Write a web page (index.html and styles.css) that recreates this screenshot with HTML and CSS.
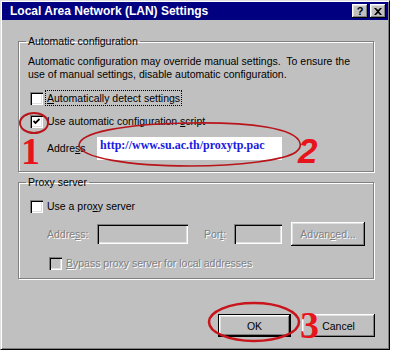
FILE: index.html
```html
<!DOCTYPE html>
<html lang="en">

<head>
  <meta charset="UTF-8">
  <title>Local Area Network (LAN) Settings</title>
  <link rel="stylesheet" href="styles.css">
</head>

<body>
  <div class="screen">
    <div class="dialog">
      <div class="titlebar">
        <span class="title">Local Area Network (LAN) Settings</span>
        <span class="title-buttons">
          <span class="tbtn">?</span>
          <span class="tbtn">
            <svg width="8" height="7" viewBox="0 0 8 7"><path d="M0 0h2l2 2 2-2h2L5 3.5 8 7H6L4 5 2 7H0l3-3.5z" fill="#000"/></svg>
          </span>
        </span>
      </div>

      <div class="content">
        <fieldset class="group group-auto">
          <legend>Automatic configuration</legend>
          <p class="desc">Automatic configuration may override manual settings.&nbsp; To ensure the<br>use of manual settings, disable automatic configuration.</p>
          <div class="check-row row-detect">
            <span class="box"></span>
            <span class="label focus"><u>A</u>utomatically detect settings</span>
          </div>
          <div class="check-row row-script">
            <span class="box">
              <svg width="7" height="7" viewBox="0 0 7 7"><polyline points="0.5,3 2.5,5 6.5,1" fill="none" stroke="#000" stroke-width="1.8"/></svg>
            </span>
            <span class="label">Use automatic configuration <u>s</u>cript</span>
          </div>
          <div class="field-row row-url">
            <span class="field-label">Addre<u>s</u>s</span>
            <div class="url">http://www.su.ac.th/proxytp.pac</div>
          </div>
        </fieldset>

        <fieldset class="group group-proxy">
          <legend>Proxy server</legend>
          <div class="check-row row-proxy">
            <span class="box"></span>
            <span class="label">Use a pro<u>x</u>y server</span>
          </div>
          <div class="field-row row-addr">
            <span class="field-label disabled">Addre<u>s</u>s:</span>
            <span class="field field-addr"></span>
            <span class="field-label disabled port-label">Por<u>t</u>:</span>
            <span class="field field-port"></span>
            <span class="btn btn-adv disabled">Advan<u>c</u>ed...</span>
          </div>
          <div class="check-row row-bypass">
            <span class="box box-disabled"></span>
            <span class="label disabled"><u>B</u>ypass proxy server for local addresses</span>
          </div>
        </fieldset>

        <div class="buttons">
          <span class="btn btn-default">OK</span>
          <span class="btn">Cancel</span>
        </div>
      </div>
    </div>

    <svg class="marks" width="400" height="352" viewBox="0 0 400 352">
      <ellipse cx="34" cy="123" rx="14" ry="10" fill="none" stroke="#b8141a" stroke-width="2"/>
      <path d="M300 143 C296 128 250 122 190 123 C120 124 80 133 79 145 C80 158 130 166 190 166 C240 166 285 160 296 152 C300 149 301 146 300 143" fill="none" stroke="#b8141a" stroke-width="1.6"/>
      <ellipse cx="254" cy="322" rx="45" ry="19" fill="none" stroke="#c8141a" stroke-width="2.5"/>
      <text x="21" y="164" class="num num-serif">1</text>
      <text x="298" y="163" class="num num-sans">2</text>
      <text x="300" y="338" class="num num-serif">3</text>
    </svg>
  </div>
</body>

</html>
```

FILE: styles.css
```css
/* Win98 style LAN settings dialog */
body {
  margin: 0;
  background-color: #fff;
  font-family: "Liberation Sans", Arial, sans-serif;
  font-size: 10.5px;
  color: #000;
}

.screen {
  position: relative;
  width: 400px;
  height: 352px;
}

.dialog {
  width: 390px;
  height: 350px;
  box-sizing: border-box;
  padding: 1px;
  background-color: #c0c0c0;
  border: 1px solid;
  border-color: #dfdfdf #000 #000 #dfdfdf;
  box-shadow: inset 1px 1px #fff, inset -1px -1px #808080;
}

.titlebar {
  height: 18px;
  display: flex;
  align-items: center;
  justify-content: space-between;
  padding: 0 2px 0 8px;
  background-color: #000080;
  color: #fff;
}

.title {
  font-weight: bold;
  font-size: 12px;
}

.title-buttons {
  display: flex;
  gap: 2px;
}

.tbtn {
  width: 16px;
  height: 14px;
  display: flex;
  align-items: center;
  justify-content: center;
  background-color: #c0c0c0;
  color: #000;
  font-weight: bold;
  font-size: 11px;
  box-shadow: inset -1px -1px #000, inset 1px 1px #fff, inset -2px -2px #808080, inset 2px 2px #dfdfdf;
}

.content {
  padding: 15px 14px 0 16px;
}

.group {
  margin: 0;
  min-width: 0;
  padding: 7px 8px 11px 9px;
  border: 1px solid #808080;
  box-shadow: 1px 1px 0 #fff, inset 1px 1px 0 #fff;
}

.group legend {
  padding: 0 2px;
  margin-left: -2px;
  line-height: 13px;
}

.group-proxy {
  margin-top: 4px;
  padding-top: 9px;
  padding-bottom: 7px;
}

.desc {
  margin: 0;
  line-height: 13px;
}

.check-row {
  display: flex;
  align-items: center;
  height: 16px;
  gap: 3px;
  padding-left: 2px;
}

.check-row .label {
  padding: 0 1px;
  line-height: 14px;
}

.row-detect {
  margin-top: 9px;
}

.row-script {
  margin-top: 7px;
}

.focus {
  outline: 1px dotted #000;
}

.box {
  width: 13px;
  height: 13px;
  box-sizing: border-box;
  display: flex;
  align-items: center;
  justify-content: center;
  flex-shrink: 0;
  background-color: #fff;
  box-shadow: inset 1px 1px #808080, inset 2px 2px #000, inset -1px -1px #fff, inset -2px -2px #dfdfdf;
}

.box svg {
  display: block;
}

.box-disabled {
  background-color: #c0c0c0;
}

.field-row {
  display: flex;
  align-items: center;
  padding-left: 19px;
}

.field-label {
  width: 50px;
}

.row-url {
  margin-top: 8px;
  align-items: flex-start;
}

.row-url .field-label {
  margin-top: 5px;
}

.url {
  width: 185px;
  height: 23px;
  box-sizing: border-box;
  padding: 1px 3px;
  background-color: #fff;
  color: #1a1ae0;
  font-family: "Liberation Serif", "Times New Roman", serif;
  font-weight: bold;
  font-size: 12px;
}

.disabled {
  color: #808080;
  text-shadow: 1px 1px #fff;
}

.row-addr {
  margin-top: 8px;
  height: 24px;
}

.field {
  height: 20px;
  box-sizing: border-box;
  background-color: #c0c0c0;
  box-shadow: inset 1px 1px #808080, inset 2px 2px #000, inset -1px -1px #fff, inset -2px -2px #dfdfdf;
}

.field-addr {
  width: 91px;
}

.port-label {
  width: auto;
  margin-left: 16px;
  margin-right: 8px;
}

.field-port {
  width: 48px;
}

.row-bypass {
  margin-top: 9px;
  padding-left: 21px;
}

.btn {
  width: 73px;
  height: 23px;
  box-sizing: border-box;
  display: flex;
  align-items: center;
  justify-content: center;
  background-color: #c0c0c0;
  box-shadow: inset -1px -1px #000, inset 1px 1px #fff, inset -2px -2px #808080, inset 2px 2px #dfdfdf;
}

.btn-adv {
  width: 74px;
  height: 24px;
  margin-left: 9px;
}

.btn-default {
  border: 1px solid #000;
}

.buttons {
  display: flex;
  justify-content: flex-end;
  gap: 11px;
  margin-top: 35px;
  margin-right: -1px;
}

.marks {
  position: absolute;
  top: 0;
  left: 0;
  pointer-events: none;
}

.num {
  fill: #e8141c;
  font-weight: bold;
}

.num-serif {
  font-family: "Liberation Serif", "Times New Roman", serif;
  font-size: 38px;
}

.num-sans {
  font-family: "Liberation Sans", Arial, sans-serif;
  font-style: italic;
  font-size: 35px;
}
```
